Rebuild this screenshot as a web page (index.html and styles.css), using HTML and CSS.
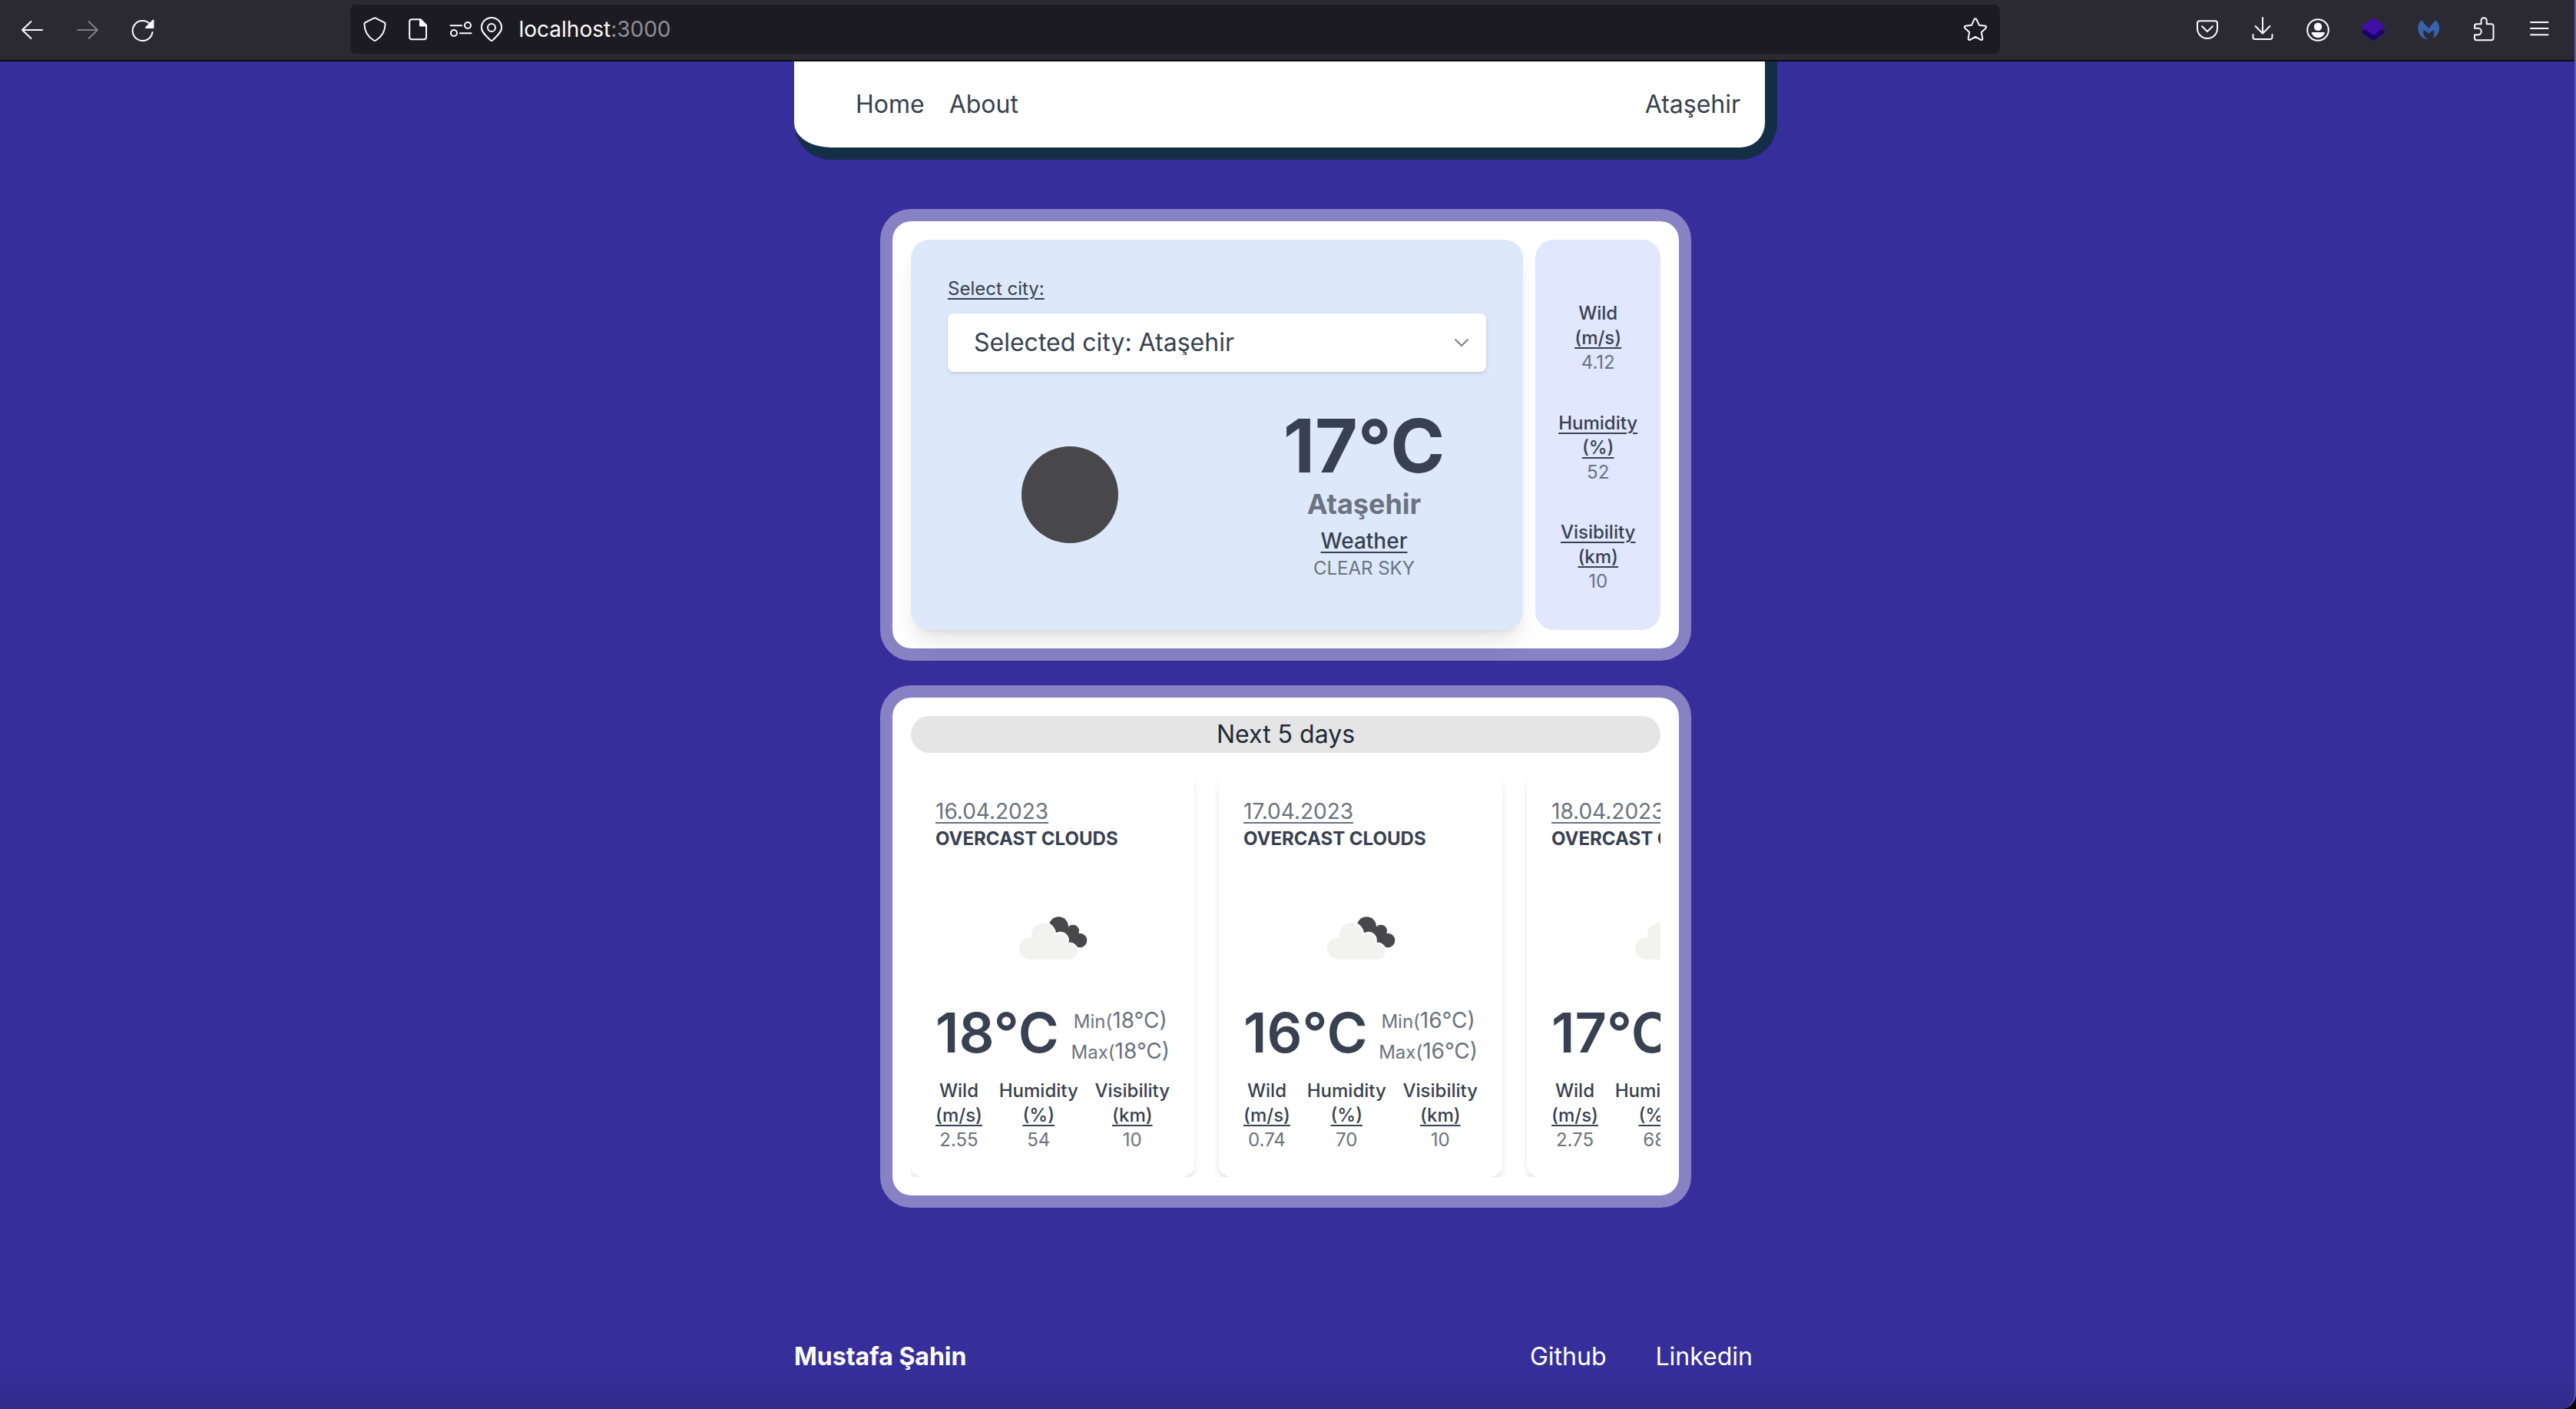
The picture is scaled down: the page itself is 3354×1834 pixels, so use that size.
FILE: index.html
```html
<!DOCTYPE html>
<html lang="en">
<head>
<meta charset="utf-8">
<meta name="viewport" content="width=device-width, initial-scale=1">
<title>Weather</title>
<link rel="stylesheet" href="styles.css">
</head>
<body>
<div class="window">
  <div class="toolbar">
    <div class="tools">
      <button class="tool" aria-label="Back"><svg class="icon" viewBox="0 0 32 32"><path d="M3 17h26M14.500 6 3 17l11.500 11"/></svg></button>
      <button class="tool" aria-label="Forward" disabled><svg class="icon" viewBox="0 0 32 32"><path d="M3 17h26M17.500 6 29 17 17.500 28"/></svg></button>
      <button class="tool" aria-label="Reload"><svg class="icon" viewBox="0 0 32 32"><path d="M28.500 20A13 13 0 1 1 25 9"/><path class="solid" d="M29.500 4.500v9.500H20z"/></svg></button>
    </div>
    <div class="address">
      <div class="chips">
        <button class="chip" aria-label="Tracking protection"><svg class="icon" viewBox="0 0 32 32"><path d="M14.900 1.600a2.400 2.400 0 0 1 2.200 0l11.500 5.800q1 .6 1 1.800C29.400 19 25.500 25.500 17.400 30.500q-1.400.8-2.800 0C6.500 25.500 2.600 19 2.400 9.200q0-1.200 1-1.800z"/></svg></button>
        <button class="chip" aria-label="Site information"><svg class="icon" viewBox="0 0 32 32"><path d="M8.200 3.200h11.300l7.500 7.500v15.600a3 3 0 0 1-3 3H8.200a3 3 0 0 1-3-3V6.200a3 3 0 0 1 3-3z"/><path class="solid" d="M19 3.500 27 11.500h-8z"/></svg></button>
        <span class="pair">
          <button class="chip" aria-label="Permissions"><svg class="icon" viewBox="0 0 32 32"><path d="M2.500 11.300h14.700M14.800 21.200h14.700"/><circle cx="25" cy="11" r="4"/><circle cx="7" cy="21" r="4"/></svg></button>
          <button class="chip" aria-label="Location"><svg class="icon" viewBox="0 0 32 32"><path d="M14.500 30.300C9 24.500 2.900 20 2.900 14a13.100 13.100 0 0 1 26.200 0c0 6-6.100 10.500-11.600 16.300q-1.500 1.300-3 0z"/><circle cx="16" cy="14" r="5"/></svg></button>
        </span>
      </div>
      <div class="url">localhost<span class="port">:3000</span></div>
      <button class="chip" aria-label="Bookmark this page"><svg class="icon" viewBox="0 0 32 32"><path d="M14.600 3.200a1.600 1.600 0 0 1 2.800 0l3.500 7.500 8 1a1.600 1.600 0 0 1 .8 2.700l-5.900 5.500 1.500 8.300a1.600 1.600 0 0 1-2.300 1.700l-7-4-7 4a1.600 1.600 0 0 1-2.300-1.700l1.500-8.300-5.900-5.500a1.600 1.600 0 0 1 .8-2.700l8-1z"/></svg></button>
    </div>
    <div class="tools">
      <button class="tool" aria-label="Pocket"><svg class="icon" viewBox="0 0 32 32"><path d="M6 5.300h20a3 3 0 0 1 3 3V15a13 13 0 0 1-26 0V8.300a3 3 0 0 1 3-3z"/><path d="M9 12.200l7 6.800 7-6.800"/></svg></button>
      <button class="tool" aria-label="Downloads"><svg class="icon" viewBox="0 0 32 32"><path d="M16 1v20M6.500 12 16 21.500 25.500 12M3.500 23v3.500a2.500 2.500 0 0 0 2.500 2.500h20a2.500 2.500 0 0 0 2.500-2.500V23"/></svg></button>
      <button class="tool" aria-label="Account"><svg class="icon" viewBox="0 0 32 32"><circle cx="16" cy="17" r="13.800"/><circle class="fill" cx="16" cy="12.700" r="5.200"/><path class="fill" d="M8.500 20h15.500q1.500 0 .8 1.500C23 25 20 27.200 16.200 27.200S9.500 25 7.700 21.500q-.7-1.500.8-1.500z"/></svg></button>
      <button class="tool" aria-label="Layers extension"><svg class="icon" viewBox="0 0 32 32"><path class="layer-low" d="M16 8l16 11.600-16 11.700L0 19.600z"/><path class="layer-top" d="M16 1l16 11.300-16 11.400L0 12.300z"/></svg></button>
      <button class="tool" aria-label="Malware guard extension"><svg class="icon" viewBox="0 0 32 32"><path class="guard" d="M7 4.300 16 15l9.200-10.700C28.300 6.500 30 10 30 14.500c0 6-3.600 10.900-8.500 13.100 1.700-3.300 2.200-7 1.200-10.600L16 21.600 9.700 17c-1.500 4.700.6 10 6.300 11.900C8 29.400 2.300 22.800 2.300 14.800 2.300 10 4 6.500 7 4.300z"/></svg></button>
      <button class="tool" aria-label="Extensions"><svg class="icon" viewBox="0 0 32 32"><path d="M12.500 9.300V4.800a3.600 3.600 0 0 1 7.200 0v4.500H26a2.500 2.500 0 0 1 2.500 2.500v16a2.500 2.500 0 0 1-2.500 2.500H6.500A2.500 2.500 0 0 1 4 27.800v-4.600h4.500a4.200 4.200 0 0 0 0-8.400H4v-3a2.500 2.500 0 0 1 2.500-2.500z"/></svg></button>
      <button class="tool" aria-label="Menu"><svg class="icon" viewBox="0 0 32 32"><path d="M5 7h22.500M5 15h22.500M5 23.300h22.500"/></svg></button>
    </div>
  </div>

  <div class="page">
    <header class="navbar">
      <nav class="nav-links">
        <a href="#home">Home</a>
        <a href="#about">About</a>
      </nav>
      <span>Ataşehir</span>
    </header>

    <main class="content">
      <section class="card current">
        <div class="today">
          <label class="city-label" for="city">Select city:</label>
          <div class="picker">
            <select id="city"><option>Selected city: Ataşehir</option></select>
            <svg class="chevron" viewBox="0 0 24 24"><path d="M4 8l8 8 8-8"/></svg>
          </div>
          <div class="summary">
            <svg class="moon" viewBox="0 0 126 126" role="img" aria-label="Clear night"><circle cx="63" cy="63" r="63"/></svg>
            <div class="reading">
              <p class="degrees">17°C</p>
              <h1 class="place">Ataşehir</h1>
              <h2 class="topic">Weather</h2>
              <p class="sky">CLEAR SKY</p>
            </div>
          </div>
        </div>
        <dl class="side">
          <div class="stat"><dt>Wild<br><u>(m/s)</u></dt><dd>4.12</dd></div>
          <div class="stat"><dt><u>Humidity<br>(%)</u></dt><dd>52</dd></div>
          <div class="stat"><dt><u>Visibility<br>(km)</u></dt><dd>10</dd></div>
        </dl>
      </section>

      <section class="card forecast">
        <h2 class="banner">Next 5 days</h2>
        <div class="days">
          <article class="day">
            <p class="date">16.04.2023</p>
            <p class="outlook">OVERCAST CLOUDS</p>
            <div class="figure"><svg class="cloud" viewBox="374 65 276 174"><g class="cloud-dark"><circle cx="534" cy="107" r="38"/><circle cx="590" cy="124" r="24"/><circle cx="617" cy="161" r="28"/><path d="M534 107l56 17 27 37-40 20-60-30z"/></g><g class="cloud-halo"><circle cx="422" cy="192" r="42"/><circle cx="474" cy="139" r="46"/><circle cx="541" cy="161" r="29"/><circle cx="576" cy="204" r="31"/></g><g class="cloud-light"><circle cx="422" cy="192" r="42"/><circle cx="474" cy="139" r="46"/><circle cx="541" cy="161" r="28"/><circle cx="576" cy="204" r="31"/><path d="M422 160l52-30 67 20 35 40v45H422z"/></g></svg></div>
            <div class="temps"><p class="temp">18°C</p><p class="range"><small>Min(</small>18°C)<br><small>Max(</small>18°C)</p></div>
            <dl class="stats">
              <div class="stat"><dt>Wild<br><u>(m/s)</u></dt><dd>2.55</dd></div>
              <div class="stat"><dt>Humidity<br><u>(%)</u></dt><dd>54</dd></div>
              <div class="stat"><dt>Visibility<br><u>(km)</u></dt><dd>10</dd></div>
            </dl>
          </article>
          <article class="day">
            <p class="date">17.04.2023</p>
            <p class="outlook">OVERCAST CLOUDS</p>
            <div class="figure"><svg class="cloud" viewBox="374 65 276 174"><g class="cloud-dark"><circle cx="534" cy="107" r="38"/><circle cx="590" cy="124" r="24"/><circle cx="617" cy="161" r="28"/><path d="M534 107l56 17 27 37-40 20-60-30z"/></g><g class="cloud-halo"><circle cx="422" cy="192" r="42"/><circle cx="474" cy="139" r="46"/><circle cx="541" cy="161" r="29"/><circle cx="576" cy="204" r="31"/></g><g class="cloud-light"><circle cx="422" cy="192" r="42"/><circle cx="474" cy="139" r="46"/><circle cx="541" cy="161" r="28"/><circle cx="576" cy="204" r="31"/><path d="M422 160l52-30 67 20 35 40v45H422z"/></g></svg></div>
            <div class="temps"><p class="temp">16°C</p><p class="range"><small>Min(</small>16°C)<br><small>Max(</small>16°C)</p></div>
            <dl class="stats">
              <div class="stat"><dt>Wild<br><u>(m/s)</u></dt><dd>0.74</dd></div>
              <div class="stat"><dt>Humidity<br><u>(%)</u></dt><dd>70</dd></div>
              <div class="stat"><dt>Visibility<br><u>(km)</u></dt><dd>10</dd></div>
            </dl>
          </article>
          <article class="day">
            <p class="date">18.04.2023</p>
            <p class="outlook">OVERCAST CLOUDS</p>
            <div class="figure"><svg class="cloud" viewBox="374 65 276 174"><g class="cloud-dark"><circle cx="534" cy="107" r="38"/><circle cx="590" cy="124" r="24"/><circle cx="617" cy="161" r="28"/><path d="M534 107l56 17 27 37-40 20-60-30z"/></g><g class="cloud-halo"><circle cx="422" cy="192" r="42"/><circle cx="474" cy="139" r="46"/><circle cx="541" cy="161" r="29"/><circle cx="576" cy="204" r="31"/></g><g class="cloud-light"><circle cx="422" cy="192" r="42"/><circle cx="474" cy="139" r="46"/><circle cx="541" cy="161" r="28"/><circle cx="576" cy="204" r="31"/><path d="M422 160l52-30 67 20 35 40v45H422z"/></g></svg></div>
            <div class="temps"><p class="temp">17°C</p></div>
            <dl class="stats">
              <div class="stat"><dt>Wild<br><u>(m/s)</u></dt><dd>2.75</dd></div>
              <div class="stat"><dt>Humidity<br><u>(%)</u></dt><dd>68</dd></div>
              <div class="stat"><dt>Visibility<br><u>(km)</u></dt><dd>10</dd></div>
            </dl>
          </article>
        </div>
      </section>
    </main>

    <footer class="footer">
      <strong>Mustafa Şahin</strong>
      <nav class="social">
        <a href="#github">Github</a>
        <a href="#linkedin">Linkedin</a>
      </nav>
    </footer>
  </div>
</div>
</body>
</html>
```
FILE: styles.css
```css
:root {
  --ink: #374151;
  --muted: #6b7280;
  --indigo: #362f9b;
}

* { box-sizing: border-box; }

body {
  margin: 0;
  background: #000;
  color: var(--ink);
  font: 400 24px/32px Inter, "Liberation Sans", sans-serif;
}

p, h1, h2, dl, dd { margin: 0; }

button {
  padding: 0;
  border: 0;
  background: none;
  color: inherit;
}

a { color: inherit; text-decoration: none; }

u, .city-label, .topic, .date {
  text-decoration: underline;
  text-decoration-thickness: 2px;
  text-underline-offset: 4px;
}

.window {
  min-height: 100vh;
  display: flex;
  flex-direction: column;
  border-right: 2px solid #5f59ae;
  border-bottom-right-radius: 20px;
  background: linear-gradient(to top, rgb(0 0 0 / .1), transparent 60px) var(--indigo);
}

/* Browser toolbar */
.toolbar {
  display: flex;
  align-items: center;
  justify-content: space-between;
  padding: 6px 10px 8px 6px;
  border-bottom: 2px solid #0c0c0d;
  background: #2b2a33;
  color: #fbfbfe;
}

.tools { display: flex; }

.tool {
  display: grid;
  place-items: center;
  width: 72px;
  height: 64px;
}

.tool:disabled { opacity: .4; }

/* The address field sits between two equal springs of 7% each. */
.address {
  display: flex;
  align-items: center;
  gap: 20px;
  flex: 1;
  height: 64px;
  margin: 0 7%;
  padding: 0 16px;
  border-radius: 8px;
  background: #1c1b22;
}

.chips { display: flex; gap: 24px; }
.pair { display: flex; gap: 8px; }

.chip { display: grid; place-items: center; }

.url {
  flex: 1;
  font-size: 28px;
}

.port { color: #8f8f96; }

.icon {
  display: block;
  width: 32px;
  height: 32px;
  fill: none;
  stroke: currentColor;
  stroke-width: 2;
  stroke-linecap: round;
  stroke-linejoin: round;
}

.icon .solid { fill: currentColor; }
.icon .fill { fill: currentColor; stroke: none; }
.icon .layer-top { fill: #420ea8; stroke: none; }
.icon .layer-low { fill: #1c0073; stroke: none; }
.icon .guard { fill: #3563ac; stroke: none; }

/* Page */
.page {
  flex: 1;
  display: flex;
  flex-direction: column;
  align-items: center;
  padding: 0 4px 44px 0;
}

.navbar {
  display: flex;
  align-items: center;
  justify-content: space-between;
  width: 100%;
  max-width: 1280px;
  padding: 32px 32px 32px 80px;
  border-right: 16px solid #152e47;
  border-bottom: 16px solid #152e47;
  border-radius: 0 0 48px 48px;
  background: #fff;
  font-size: 32px;
  line-height: 48px;
}

.nav-links { display: flex; gap: 32px; }

.content {
  display: grid;
  gap: 32px;
  width: 100%;
  max-width: 1056px;
  margin-top: 64px;
}

.card {
  min-width: 0;
  padding: 24px;
  border: 16px solid rgb(255 255 255 / .4);
  border-radius: 40px;
  background: #fff padding-box;
}

/* Current weather */
.current {
  display: grid;
  grid-template-columns: 5fr 1fr;
}

.today {
  margin-right: 16px;
  padding: 48px 48px 64px;
  border-radius: 24px;
  background: #dde9fb;
  box-shadow: 0 20px 30px -6px rgb(0 0 0 / .1), 0 8px 12px -8px rgb(0 0 0 / .1);
}

.city-label {
  display: block;
  margin-bottom: 16px;
}

.picker { display: grid; align-items: center; }

.picker select, .chevron { grid-area: 1 / 1; }

.picker select {
  appearance: none;
  width: 100%;
  height: 76px;
  padding: 0 80px 0 34px;
  border: 0;
  border-radius: 8px;
  background: #fff;
  box-shadow: 0 2px 6px rgb(0 0 0 / .1), 0 2px 4px -2px rgb(0 0 0 / .1);
  color: inherit;
  font: inherit;
  font-size: 32px;
}

.chevron {
  justify-self: end;
  width: 24px;
  margin-right: 20px;
  fill: none;
  stroke: #808080;
  stroke-width: 2;
  stroke-linecap: round;
  pointer-events: none;
}

.summary {
  display: grid;
  grid-template-columns: 1fr 1fr;
  gap: 64px;
  place-items: center;
  margin-top: 48px;
  text-align: center;
}

.moon { width: 126px; fill: #48484a; }

.degrees { font-size: 96px; font-weight: 700; line-height: 96px; }
.place { color: var(--muted); font-size: 36px; font-weight: 700; line-height: 56px; }
.topic { font-size: 28px; font-weight: 500; line-height: 40px; }
.sky { color: var(--muted); }

.side {
  display: grid;
  grid-template-rows: repeat(3, 1fr);
  padding-top: 80px;
  border-radius: 24px;
  background: #e0e7ff;
}

.stat { text-align: center; }
.stat dt { font-weight: 500; }
.stat dd { color: var(--muted); }

/* Forecast */
.banner {
  border-radius: 24px;
  background: #e5e5e5;
  color: #1f2937;
  font-size: 32px;
  font-weight: 400;
  line-height: 48px;
  text-align: center;
}

.days {
  display: flex;
  gap: 32px;
  padding-top: 24px;
  overflow: hidden;
}

.day {
  flex: none;
  width: 369px;
  padding: 32px;
  border-radius: 16px;
  background: #fff;
  box-shadow: 0 8px 12px -2px rgb(0 0 0 / .1), 0 4px 8px -4px rgb(0 0 0 / .1);
}

.date { color: var(--muted); font-size: 28px; line-height: 40px; }
.outlook { font-weight: 700; }

.figure { padding: 84px 0 58px; }

.cloud { display: block; width: 92px; height: 58px; margin: 0 auto; }
.cloud-dark { fill: #48484a; }
.cloud-halo { fill: #fff; stroke: #fff; stroke-width: 9; }
.cloud-light { fill: #f2f2f1; }

.temps {
  display: flex;
  justify-content: space-between;
  height: 80px;
}

.temp { font-size: 72px; font-weight: 600; line-height: 72px; }

.range {
  color: var(--muted);
  font-size: 28px;
  line-height: 40px;
  text-align: center;
}

.range small { font-size: 24px; line-height: 24px; }

.stats {
  display: flex;
  justify-content: space-between;
  margin-top: 16px;
}

.footer {
  display: flex;
  justify-content: space-between;
  width: 100%;
  max-width: 1280px;
  margin-top: auto;
  padding-right: 32px;
  color: #fff;
  font-size: 32px;
  line-height: 48px;
}

.social { display: flex; gap: 64px; }
```
